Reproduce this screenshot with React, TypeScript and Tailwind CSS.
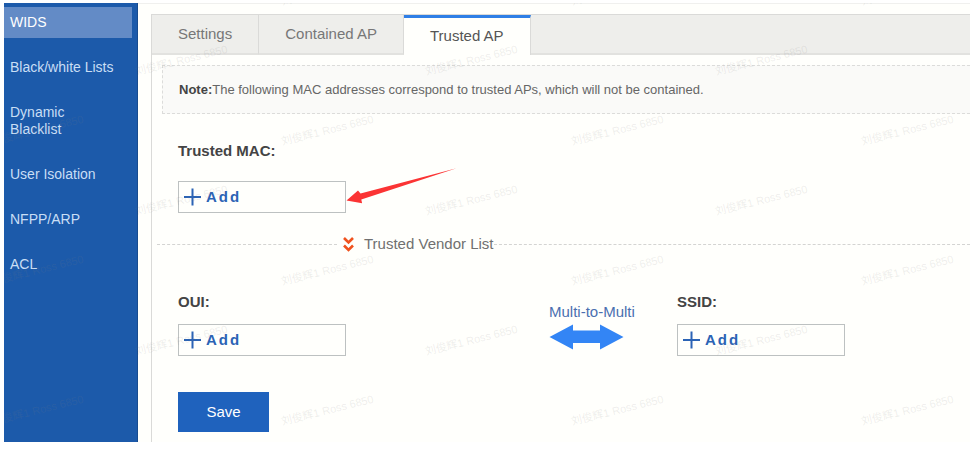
import { useState } from "react";
import clsx from "clsx";

const NAV_ITEMS = ["WIDS", "Black/white Lists", "Dynamic Blacklist", "User Isolation", "NFPP/ARP", "ACL"];
const TABS = ["Settings", "Contained AP", "Trusted AP"];

const LABEL_CLASS = "block text-[15px] leading-5 font-bold text-[#444]";

function AddButton({ id }: { id: string }) {
  return (
    <button
      id={id}
      type="button"
      className="flex h-8 w-[168px] items-center gap-1 border border-[#bdc1c1] px-1 text-left text-[15px] font-bold tracking-[2px] text-[#2b63b5]"
    >
      <svg width="19" height="18" viewBox="0 0 19 18" fill="none" stroke="currentColor" strokeWidth="2" aria-hidden="true">
        <path d="M1 9h17M9.5 0.5v17" />
      </svg>
      Add
    </button>
  );
}

function Watermark() {
  return (
    <div
      aria-hidden="true"
      className="pointer-events-none absolute inset-x-0 -top-12 text-[11px] leading-none whitespace-nowrap text-[#808080]/14 select-none"
    >
      {[0, 1, 2, 3, 4, 5, 6].map((row) => (
        <div key={row} className={clsx("flex h-[70px]", row % 2 === 0 ? "-ml-28" : "ml-8")}>
          {[0, 1, 2, 3].map((col) => (
            <div key={col} className="flex w-[290px] shrink-0 items-center justify-center">
              <span className="-rotate-14">刘俊辉1 Ross 6850</span>
            </div>
          ))}
        </div>
      ))}
    </div>
  );
}

export default function App() {
  const [section, setSection] = useState("WIDS");
  const [tab, setTab] = useState("Trusted AP");

  return (
    <div className="bg-white pt-[3px] pl-1 font-['Liberation_Sans','Noto_Sans_CJK_SC',sans-serif]">
      <div className="relative flex overflow-hidden bg-[#fffffc]">
        {/* Sidebar */}
        <nav className="flex w-[134px] shrink-0 flex-col gap-3.5 border-r border-[#174b8f] bg-[#1c5aaa] pt-1 pr-[5px] text-sm leading-[17px]">
          {NAV_ITEMS.map((item) => (
            <a
              key={item}
              href="#"
              onClick={() => setSection(item)}
              className={clsx("py-[7px] pr-4 pl-1.5", item === section ? "bg-[#638bc6] text-white" : "text-[#c9def5]", item === "Black/white Lists" && "whitespace-nowrap")}
            >
              {item}
            </a>
          ))}
        </nav>

        <main className="min-w-0 flex-1 border-t border-[#f0f0ee] pl-[13px]">
          <div className="mt-2.5 border-t border-l border-[#dadad8] pb-2.5">
            {/* Tabs */}
            <div role="tablist" className="flex h-10 bg-[#eeeeeb] text-[15px] text-[#777]">
              {TABS.map((name) => (
                <button
                  key={name}
                  type="button"
                  role="tab"
                  aria-selected={name === tab}
                  onClick={() => setTab(name)}
                  className={clsx(
                    "border-r border-r-[#dadad8] px-[26px]",
                    name === tab ? "border-t-3 border-t-[#2f7fe6] bg-[#fffffc] text-[#555]" : "border-b-2 border-b-[#e2e2df]"
                  )}
                >
                  {name}
                </button>
              ))}
              <div className="flex-1 border-b-2 border-[#e2e2df]" />
            </div>

            <p className="mt-2.5 ml-2.5 border border-r-0 border-dashed border-[#dcdcda] bg-[#fafaf8] px-4 py-3.5 text-[13px] leading-[19px] text-[#666]">
              <strong className="text-[#444]">Note:</strong>
              The following MAC addresses correspond to trusted APs, which will not be contained.
            </p>

            {/* Trusted MAC */}
            <div className="mt-[27px] ml-[26px]">
              <label htmlFor="trusted-mac" className={LABEL_CLASS}>Trusted MAC:</label>
              <div className="relative mt-5 w-fit">
                <AddButton id="trusted-mac" />
                <svg className="absolute -top-3.5 left-full" width="112" height="38" viewBox="0 0 112 38" aria-hidden="true">
                  <path d="M0.5 33.500L12 23.500l2.500 3L110.500 1.300 15.300 32.500l0.800 3.800z" fill="#fb3434" />
                </svg>
              </div>
            </div>

            {/* Vendor list divider */}
            <div className="mt-[21px] ml-[5px] flex h-5 items-center text-[15px] text-[#707070]">
              <span className="w-[180px] border-t border-dashed border-[#d4d4d2]" />
              <svg className="ml-1.5" width="11" height="15" viewBox="0 0 11 15" fill="none" stroke="#f0521e" strokeWidth="2.6" aria-hidden="true">
                <path d="M1 1l4.500 4.500L10 1M1 8.500l4.500 4.500 4.500-4.500" />
              </svg>
              <span className="ml-2.5">Trusted Vendor List</span>
              <span className="flex-1 border-t border-dashed border-[#d4d4d2]" />
            </div>

            <div className="mt-[38px] ml-[26px] flex">
              <div>
                <label htmlFor="oui" className={LABEL_CLASS}>OUI:</label>
                <div className="mt-3">
                  <AddButton id="oui" />
                </div>
              </div>
              <div className="mt-2 ml-[203px] w-32 text-[#4a6fb0]">
                <p className="text-[15px] leading-6">Multi-to-Multi</p>
                <svg width="75" height="26" viewBox="0 0 75 26" aria-hidden="true">
                  <path d="M0.5 13L24 0.5V6.5H51V0.5L74.500 13 51 25.500V19H24V25.500z" fill="#3385f5" />
                </svg>
              </div>
              <div>
                <label htmlFor="ssid" className={LABEL_CLASS}>SSID:</label>
                <div className="mt-3">
                  <AddButton id="ssid" />
                </div>
              </div>
            </div>

            <button type="button" className="mt-9 ml-[26px] h-10 w-[91px] bg-[#1f62bd] text-[15px] text-white">
              Save
            </button>
          </div>
        </main>

        <Watermark />
      </div>
    </div>
  );
}
